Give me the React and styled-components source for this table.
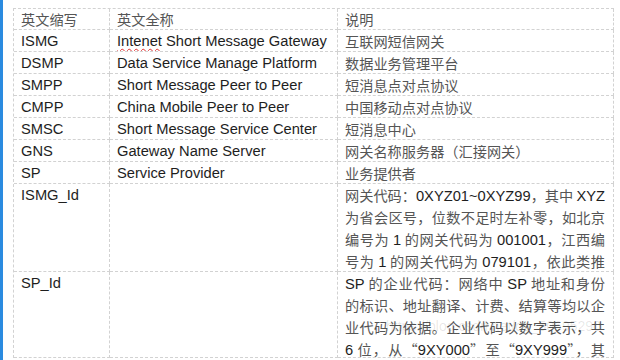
import React from "react";
import styled, { createGlobalStyle } from "styled-components";

const Global = createGlobalStyle`
  html, body { margin: 0; padding: 0; background: #fff; }
  body { width: 620px; height: 360px; overflow: hidden; }
`;

const Page = styled.div`
  display: flex;
  height: 360px;
  position: relative;
  overflow: hidden;
`;

const Bar = styled.div`
  width: 3px;
  flex: none;
  background: #2a8be0;
`;

const Content = styled.div`
  padding: 8px 0 0 10px;
`;

const Grid = styled.div`
  display: grid;
  grid-template-columns: 96px 228px 276px;
  grid-template-rows: 21px repeat(7, 22px) 88px 86px;
  border-top: 1px dashed #d2d2d2;
  border-left: 1px dashed #d2d2d2;
  width: 600px;
`;

const Cell = styled.div`
  box-sizing: border-box;
  border-right: 1px dashed #d2d2d2;
  border-bottom: 1px dashed #d2d2d2;
  padding: ${(p) => (p.$head ? "1px 0 0 7px" : "2px 0 0 7px")};
  font-family: "Liberation Sans", Arial, "Noto Sans CJK SC", sans-serif;
  font-size: 14.7px;
  line-height: 18px;
  color: #1e1e1e;
  white-space: nowrap;
  overflow: hidden;
`;

const Cjk = styled.span`
  font-family: "Noto Sans CJK SC", sans-serif;
  font-size: 14.2px;
  color: #555;
`;

const Misspelled = styled.span`
  text-decoration: underline wavy #e03030;
  text-decoration-thickness: 1px;
  text-underline-offset: 2px;
`;

const Para = styled.div`
  padding-right: 8px;
`;

const Line = styled.div`
  height: 22px;
  line-height: 22px;
  text-align: justify;
  text-align-last: justify;
  white-space: normal;
`;

const Lat = styled.span`
  font-family: "Liberation Sans", Arial, sans-serif;
  font-size: 14.7px;
  color: #1e1e1e;
`;

const Watermark = styled.div`
  position: absolute;
  left: 386px;
  top: 318px;
  font-family: "Liberation Sans", Arial, sans-serif;
  font-size: 14px;
  color: rgba(0, 0, 0, 0.1);
  white-space: nowrap;
`;

const rows = [
  ["ISMG", "Intenet Short Message Gateway", "互联网短信网关"],
  ["DSMP", "Data Service Manage Platform", "数据业务管理平台"],
  ["SMPP", "Short Message Peer to Peer", "短消息点对点协议"],
  ["CMPP", "China Mobile Peer to Peer", "中国移动点对点协议"],
  ["SMSC", "Short Message Service Center", "短消息中心"],
  ["GNS", "Gateway Name Server", "网关名称服务器（汇接网关）"],
  ["SP", "Service Provider", "业务提供者"],
];

const Mixed = ({ parts }) =>
  parts.map((p, i) =>
    i % 2 === 0 ? <Cjk key={i}>{p}</Cjk> : <Lat key={i}>{p}</Lat>
  );

const ismgLines = [
  ["网关代码：", "0XYZ01~0XYZ99", "，其中 ", "XYZ"],
  ["为省会区号，位数不足时左补零，如北京"],
  ["编号为 ", "1", " 的网关代码为 ", "001001", "，江西编"],
  ["号为 ", "1", " 的网关代码为 ", "079101", "，依此类推"],
];

const spLines = [
  ["", "SP", " 的企业代码：网络中 ", "SP", " 地址和身份"],
  ["的标识、地址翻译、计费、结算等均以企"],
  ["业代码为依据。企业代码以数字表示，共"],
  ["", "6", " 位，从“", "9XY000", "”至“", "9XY999", "”，其"],
];

export default function App() {
  return (
    <>
      <Global />
      <Page>
        <Bar />
        <Content>
          <Grid>
            <Cell $head><Cjk>英文缩写</Cjk></Cell>
            <Cell $head><Cjk>英文全称</Cjk></Cell>
            <Cell $head><Cjk>说明</Cjk></Cell>
            {rows.map(([a, b, c], i) => (
              <React.Fragment key={a}>
                <Cell>{a}</Cell>
                <Cell>
                  {i === 0 ? (
                    <>
                      <Misspelled>Intenet</Misspelled> Short Message Gateway
                    </>
                  ) : (
                    b
                  )}
                </Cell>
                <Cell><Cjk>{c}</Cjk></Cell>
              </React.Fragment>
            ))}
            <Cell>ISMG_Id</Cell>
            <Cell />
            <Cell style={{ paddingTop: 0 }}>
              <Para>
                {ismgLines.map((l, i) => (
                  <Line key={i}><Mixed parts={l} /></Line>
                ))}
              </Para>
            </Cell>
            <Cell>SP_Id</Cell>
            <Cell />
            <Cell style={{ paddingTop: 0 }}>
              <Para>
                {spLines.map((l, i) => (
                  <Line key={i}><Mixed parts={l} /></Line>
                ))}
              </Para>
            </Cell>
          </Grid>
        </Content>
        <Watermark>https://blog.csdn.net/qq_50695290</Watermark>
      </Page>
    </>
  );
}
